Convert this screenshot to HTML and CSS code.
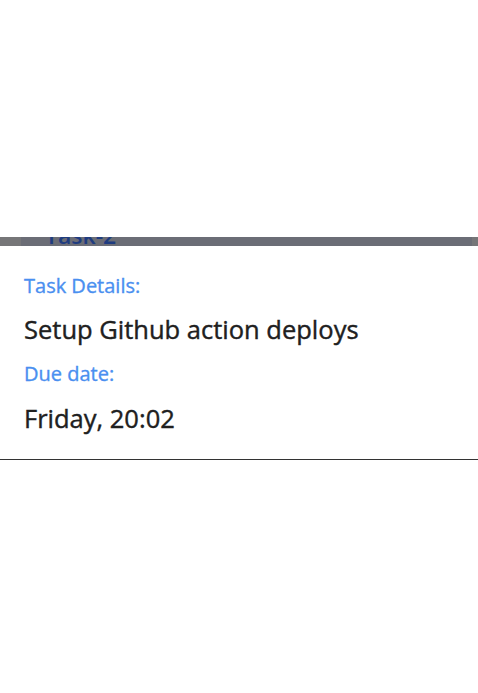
FILE: index.html
```html
<!DOCTYPE html>
<html lang="en">
<head>
<meta charset="utf-8">
<title>Task Details</title>
<link rel="stylesheet" href="styles.css">
</head>
<body>
<div class="top-space"></div>
<div class="backdrop">
  <div class="list-item">
    <span class="list-title">Task-2</span>
  </div>
</div>
<section class="sheet">
  <div class="label">Task Details:</div>
  <div class="value value-first">Setup Github action deploys</div>
  <div class="label label-second">Due date:</div>
  <div class="value value-second">Friday, 20:02</div>
</section>
</body>
</html>
```

FILE: styles.css
```css
html, body {
  margin: 0;
  padding: 0;
  background: #ffffff;
  font-family: "Open Sans", "Noto Sans", sans-serif;
}

.top-space {
  height: 237px;
}

.backdrop {
  height: 9px;
  background: #767678;
  padding: 0 6px 0 21px;
  overflow: hidden;
  display: flex;
}

.list-item {
  flex: 1;
  background: #6b6d76;
  position: relative;
  overflow: hidden;
}

.list-title {
  position: absolute;
  left: 24px;
  bottom: -1px;
  font-size: 23px;
  line-height: 23px;
  font-weight: 600;
  color: #1f3c80;
}

.sheet {
  background: #ffffff;
  border-top-left-radius: 18px;
  border-bottom: 1.5px solid #333333;
  padding: 26px 24px 24px 24px;
  display: flex;
  flex-direction: column;
}

.label {
  font-size: 20px;
  line-height: 28px;
  color: #4a8ff0;
  -webkit-text-stroke: 0.35px #4a8ff0;
}

.value {
  font-size: 25.5px;
  line-height: 34px;
  color: #202020;
  -webkit-text-stroke: 0.4px #202020;
}

.value-first {
  margin-top: 12px;
}

.label-second {
  margin-top: 14px;
}

.value-second {
  margin-top: 13px;
}
```
